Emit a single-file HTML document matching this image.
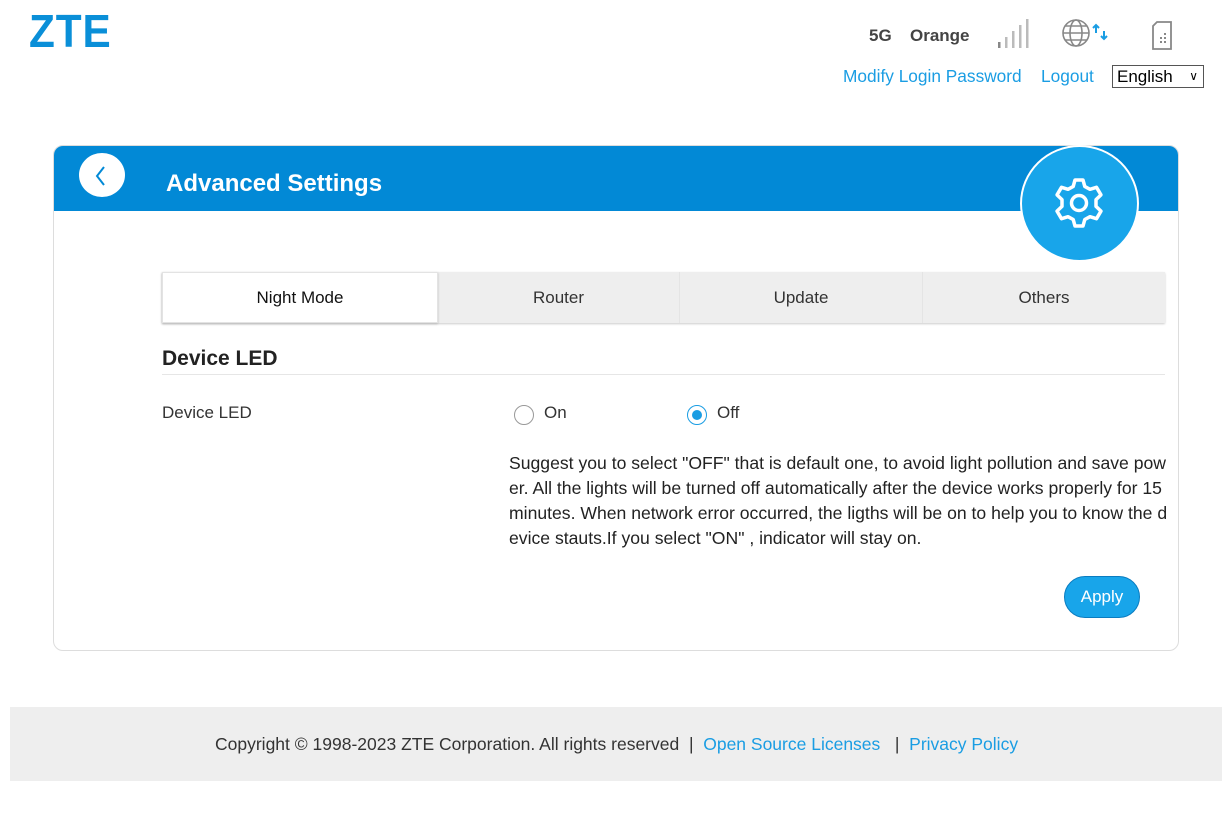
<!DOCTYPE html>
<html><head><meta charset="utf-8"><style>
*{box-sizing:border-box;margin:0;padding:0}
body{width:1231px;height:829px;background:#fff;font-family:"Liberation Sans",Arial,sans-serif;position:relative;overflow:hidden;color:#333}
.a{position:absolute}
.blue{color:#1a9de3}
</style></head><body>
<div class="a" style="left:29px;top:4px;font-size:46px;font-weight:bold;color:#0a8fd8;letter-spacing:1px;transform:scaleX(0.92);transform-origin:left">ZTE</div>
<div class="a" style="left:869px;top:26px;font-size:17px;font-weight:bold;color:#444">5G</div>
<div class="a" style="left:910px;top:26px;font-size:17px;font-weight:bold;color:#444">Orange</div>
<svg class="a" style="left:997px;top:18px" width="34" height="32"><g fill="#bbb"><rect x="1" y="24" width="2.5" height="6" fill="#888"/><rect x="8" y="19" width="2.5" height="11"/><rect x="15" y="13" width="2.5" height="17"/><rect x="22" y="7" width="2.5" height="23"/><rect x="29" y="1" width="2.5" height="29"/></g></svg>
<svg class="a" style="left:1060px;top:17px" width="55" height="32"><g fill="none" stroke="#888" stroke-width="1.6"><circle cx="16" cy="16" r="13"/><ellipse cx="16" cy="16" rx="6" ry="13"/><line x1="3" y1="16" x2="29" y2="16"/><path d="M5 9h22M5 23h22"/></g><path d="M36 16V8M33 11l3-3 3 3M44 14v8M41 19l3 3 3-3" stroke="#1a9de3" stroke-width="2" fill="none"/></svg>
<svg class="a" style="left:1151px;top:20px" width="26" height="32"><path d="M6 2h14v27H2V6z" fill="none" stroke="#888" stroke-width="1.8"/><g fill="#888"><rect x="9" y="17" width="2" height="2"/><rect x="13" y="17" width="2" height="2"/><rect x="9" y="21" width="2" height="2"/><rect x="13" y="21" width="2" height="2"/><rect x="13" y="13" width="2" height="2"/></g></svg>
<div class="a blue" style="left:843px;top:66px;font-size:17.3px">Modify Login Password</div>
<div class="a blue" style="left:1041px;top:66px;font-size:17.3px">Logout</div>
<div class="a" style="left:1112px;top:65px;width:92px;height:23px;border:1px solid #555;font-size:17px;padding-left:4px;line-height:21px;color:#000">English <span style="font-size:12px;position:absolute;right:5px">&#8744;</span></div>

<div class="a" style="left:53px;top:145px;width:1126px;height:506px;border:1px solid #ddd;border-radius:10px;overflow:hidden">
<div style="height:65px;background:#0289d6"></div>
</div>
<div class="a" style="left:79px;top:153px;width:46px;height:44px;border-radius:50%;background:#fff"></div>
<svg class="a" style="left:91px;top:163px" width="20" height="26"><path d="M13 4L6 13l7 9" stroke="#0289d6" stroke-width="2" fill="none"/></svg>
<div class="a" style="left:166px;top:170px;font-size:24px;font-weight:bold;color:#fff">Advanced Settings</div>
<div class="a" style="left:1020px;top:145px;width:119px;height:117px;border-radius:50%;background:#18a5ea;border:2px solid #fff"></div>
<svg class="a" style="left:1049px;top:173px" width="60" height="60" viewBox="0 0 60 60"><path d="M26 3h8l1.8 6.5 5.2 2.8 6.5-2 4.5 7.6-5 4.7v6.8l5 4.7-4.5 7.6-6.5-2-5.2 2.8L34 49h-8l-1.8-6.5-5.2-2.8-6.5 2-4.5-7.6 5-4.7v-6.8l-5-4.7 4.5-7.6 6.5 2 5.2-2.8z" fill="none" stroke="#fff" stroke-width="3.5" stroke-linejoin="round" transform="translate(0,4)"/><circle cx="30" cy="30" r="7.5" fill="none" stroke="#fff" stroke-width="3.5"/></svg>

<div class="a" style="left:162px;top:272px;width:1003px;height:51px;background:#eee;box-shadow:0 1px 2px #ccc"></div>
<div class="a" style="left:162px;top:272px;width:276px;height:51px;background:#fff;border:1px solid #e3e3e3;box-shadow:0 1px 2px #bbb;text-align:center;line-height:50px;font-size:17px;color:#111">Night Mode</div>
<div class="a" style="left:438px;top:272px;width:241px;height:51px;text-align:center;line-height:51px;font-size:17px">Router</div>
<div class="a" style="left:679px;top:272px;width:243px;height:51px;border-left:1px solid #e4e4e4;text-align:center;line-height:51px;font-size:17px">Update</div>
<div class="a" style="left:922px;top:272px;width:243px;height:51px;border-left:1px solid #e4e4e4;text-align:center;line-height:51px;font-size:17px">Others</div>

<div class="a" style="left:162px;top:347px;font-size:21px;font-weight:bold;color:#222">Device LED</div>
<div class="a" style="left:162px;top:374px;width:1003px;height:1px;background:#e6e6e6"></div>
<div class="a" style="left:162px;top:403px;font-size:17px">Device LED</div>
<div class="a" style="left:514px;top:405px;width:20px;height:20px;border-radius:50%;border:1.5px solid #999"></div>
<div class="a" style="left:544px;top:403px;font-size:17px">On</div>
<div class="a" style="left:687px;top:405px;width:20px;height:20px;border-radius:50%;border:1.5px solid #1a9de3"></div>
<div class="a" style="left:692px;top:410px;width:10px;height:10px;border-radius:50%;background:#1a9de3"></div>
<div class="a" style="left:717px;top:403px;font-size:17px">Off</div>
<div class="a" style="left:509px;top:451px;font-size:17.6px;line-height:25px;color:#222;white-space:nowrap">Suggest you to select "OFF" that is default one, to avoid light pollution and save pow<br>er. All the lights will be turned off automatically after the device works properly for 15<br>minutes. When network error occurred, the ligths will be on to help you to know the d<br>evice stauts.If you select "ON" , indicator will stay on.</div>
<div class="a" style="left:1064px;top:576px;width:76px;height:42px;border-radius:21px;background:#18a5ea;border:1px solid #0a7cc0;color:#fff;font-size:17px;text-align:center;line-height:40px">Apply</div>

<div class="a" style="left:10px;top:707px;width:1212px;height:74px;background:#eeeeee"></div>
<div class="a" style="left:215px;top:734px;font-size:17.5px;color:#333;white-space:pre">Copyright © 1998-2023 ZTE Corporation. All rights reserved  |  <span class="blue">Open Source Licenses</span>   |  <span class="blue">Privacy Policy</span></div>
</body></html>
